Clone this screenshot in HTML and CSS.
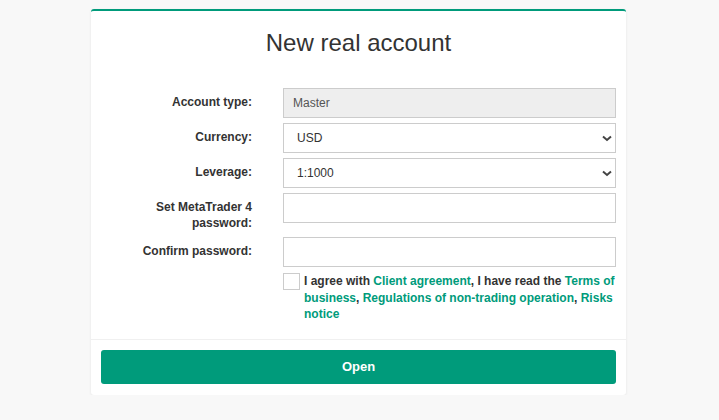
FILE: index.html
```html
<!DOCTYPE html>
<html>
<head>
    <title>New real account</title>
    <link rel="stylesheet" href="styles.css">
</head>
<body>
    <div class="card">
        <div class="card-body">
            <h1>New real account</h1>
            <form class="account-form">
                <label class="field-label" for="accountType">Account type:</label>
                <input class="field" type="text" id="accountType" value="Master" readonly>

                <label class="field-label" for="currency">Currency:</label>
                <select class="field" id="currency">
                    <option>USD</option>
                    <option>EUR</option>
                </select>

                <label class="field-label" for="leverage">Leverage:</label>
                <select class="field" id="leverage">
                    <option>1:1000</option>
                    <option>1:500</option>
                </select>

                <label class="field-label" for="password">Set MetaTrader 4 password:</label>
                <input class="field" type="password" id="password">

                <label class="field-label" for="confirm">Confirm password:</label>
                <input class="field" type="password" id="confirm">

                <div></div>
                <div class="agree">
                    <span class="check"></span>
                    <p>I agree with <a href="#">Client agreement</a>, I have read the <a href="#">Terms of business</a>, <a href="#">Regulations of non-trading operation</a>, <a href="#">Risks notice</a></p>
                </div>
            </form>
        </div>
        <div class="card-footer">
            <button type="submit" class="open-btn">Open</button>
        </div>
    </div>
</body>
</html>
```

FILE: styles.css
```css
body {
    font-family: "Liberation Sans", Arial, sans-serif;
    background-color: #f8f8f8;
    margin: 0;
    padding-top: 9px;
    color: #333;
}
.card {
    width: 535px;
    margin-left: 91px;
    background-color: #fff;
    border-top: 2px solid #009b7b;
    border-radius: 3px;
    box-shadow: 0 1px 3px rgba(0, 0, 0, 0.08);
}
.card-body {
    padding: 20px 10px 16px 10px;
}
h1 {
    margin: 0 0 33px 0;
    font-size: 24px;
    line-height: 24px;
    font-weight: normal;
    text-align: center;
    color: #333;
}
.account-form {
    display: grid;
    grid-template-columns: 151px 1fr;
    column-gap: 31px;
    row-gap: 5px;
}
.field-label {
    font-size: 12px;
    font-weight: bold;
    line-height: 16px;
    text-align: right;
    padding-top: 6px;
    padding-bottom: 1px;
}
.field {
    box-sizing: border-box;
    height: 30px;
    width: 100%;
    border: 1px solid #ccc;
    background-color: #fff;
    font-family: "Liberation Sans", Arial, sans-serif;
    font-size: 12px;
    color: #333;
    padding: 0 9px;
    margin: 0;
    outline: none;
}
input[readonly] {
    background-color: #eee;
    color: #555;
}
select.field {
    appearance: none;
    padding-left: 13px;
    background-image: url("data:image/svg+xml,%3Csvg xmlns='http://www.w3.org/2000/svg' width='10' height='7' viewBox='0 0 10 7'%3E%3Cpath d='M1 1.5l4 3.5 4-3.5' fill='none' stroke='%23444' stroke-width='2'/%3E%3C/svg%3E");
    background-repeat: no-repeat;
    background-position: right 3px center;
}
.agree {
    display: flex;
    gap: 4px;
}
.check {
    flex: none;
    box-sizing: border-box;
    width: 17px;
    height: 17px;
    margin-top: 1px;
    border: 1px solid #ccc;
    background-color: #fff;
}
.agree p {
    margin: 0;
    font-size: 12px;
    font-weight: bold;
    line-height: 16.5px;
    padding-top: 1px;
}
.agree a {
    color: #009b7b;
    text-decoration: none;
}
.card-footer {
    border-top: 1px solid #f0f0f0;
    padding: 10px 10px 11px 10px;
}
.open-btn {
    display: block;
    width: 100%;
    height: 34px;
    border: none;
    border-radius: 3px;
    background-color: #009b7b;
    color: #fff;
    font-family: "Liberation Sans", Arial, sans-serif;
    font-size: 13px;
    font-weight: bold;
    cursor: pointer;
}
```
